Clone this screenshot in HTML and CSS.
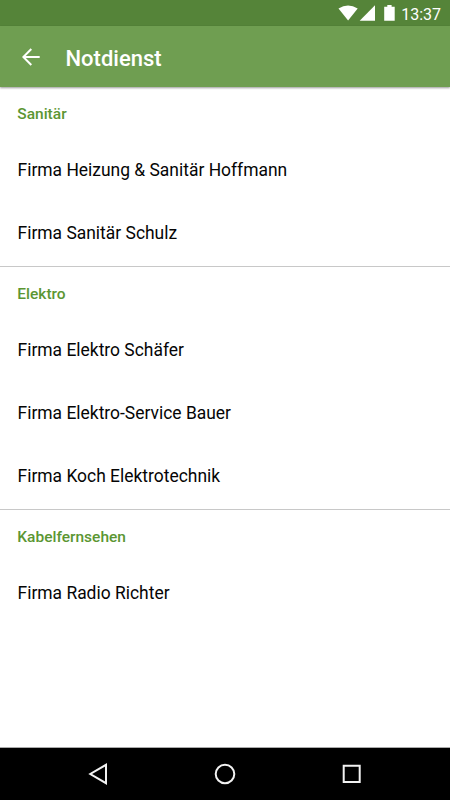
FILE: index.html
```html
<!DOCTYPE html>
<html lang="de">
<head>
<meta charset="utf-8">
<title>Notdienst</title>
<link rel="stylesheet" href="styles.css">
</head>
<body>
<div class="status">
  <svg width="57" height="26" viewBox="0 0 57 26" fill="#fff"><path d="M0.500 8.600Q10 2.400 19.700 8.600L10.100 20.600Z"/><path d="M37 5.200V20.700H21.700Z"/><path d="M46.200 6.800H49.300V5H53.600V6.800H56.700V20.700H46.200Z"/></svg>
  <span>13:37</span>
</div>
<header class="bar">
  <svg class="back" width="18" height="18" viewBox="0 0 18 18"><path d="M17.700 9H1.500M9.300 1L1.300 9L9.300 17" fill="none" stroke="#fff" stroke-width="2"/></svg>
  <h1>Notdienst</h1>
</header>
<main>
  <section><h2>Sanitär</h2><ul><li>Firma Heizung &amp; Sanitär Hoffmann</li><li>Firma Sanitär Schulz</li></ul></section>
  <section><h2>Elektro</h2><ul><li>Firma Elektro Schäfer</li><li>Firma Elektro-Service Bauer</li><li>Firma Koch Elektrotechnik</li></ul></section>
  <section><h2>Kabelfernsehen</h2><ul><li>Firma Radio Richter</li></ul></section>
</main>
<nav>
  <svg width="22" height="22" viewBox="0 0 22 22"><path d="M19 1.800V20.200L3.300 11Z"/></svg>
  <svg width="22" height="22" viewBox="0 0 22 22"><circle cx="11" cy="11" r="9.300"/></svg>
  <svg width="22" height="22" viewBox="0 0 22 22"><path d="M2.700 2.700H18.700V18.900H2.700Z"/></svg>
</nav>
</body>
</html>
```
FILE: styles.css
```css
* { box-sizing: border-box; }
body { margin: 0; height: 800px; display: flex; flex-direction: column; background: #fff; font-family: Roboto, sans-serif; overflow: hidden; }
.status { height: 26px; background: #558439; color: #fff; display: flex; justify-content: flex-end; align-items: center; gap: 6px; padding-right: 9px; font-size: 16px; }
.status span { padding-top: 2px; }
.bar { height: 61.400px; background: #6f9e51; display: flex; align-items: center; padding-left: 21.700px; color: #fff; box-shadow: 0 1px 2px rgba(0,0,0,.4); }
h1 { margin: 3px 0 0 25.800px; font-size: 22px; font-weight: 500; }
main { flex: 1; }
section { padding-bottom: 1px; }
section + section { border-top: 1px solid #c8c8c8; }
h2 { margin: 0; height: 51.400px; line-height: 54.200px; padding-left: 17.300px; font-size: 15.500px; font-weight: 500; color: #5b9632; }
ul { margin: 0; padding: 0; list-style: none; }
li { height: 63.200px; line-height: 63.200px; padding-left: 17.500px; font-size: 17.450px; color: #050505; }
nav { height: 53px; background: #000; border-top: 1px solid #aaa; display: flex; justify-content: space-between; align-items: center; padding: 0 87px; }
nav svg { fill: none; stroke: #f2f2f2; stroke-width: 2; }
```
